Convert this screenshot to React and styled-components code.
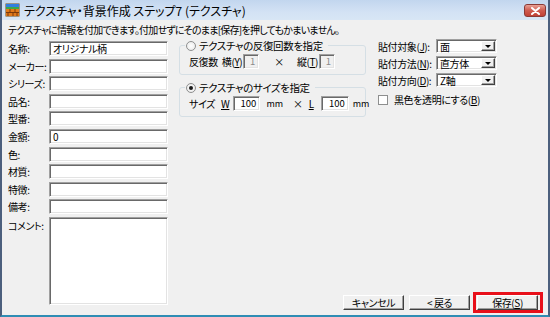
import React from "react";
import styled, { createGlobalStyle, css } from "styled-components";

const GlobalStyle = createGlobalStyle`
    html, body {
        margin: 0;
        padding: 0;
        background: #f0f0f0;
    }
    * {
        box-sizing: border-box;
    }
`;

const FONT = `"Noto Sans CJK JP", "Liberation Sans", sans-serif`;

const sunken = css`
    background: #fff;
    border: 1px solid;
    border-color: #a0a0a0 #fff #fff #a0a0a0;
    box-shadow: inset 1px 1px 0 #696969, inset -1px -1px 0 #e3e3e3;
`;

const raised = css`
    background: #f0f0f0;
    border: 1px solid;
    border-color: #fff #404040 #404040 #fff;
    box-shadow: inset -1px -1px 0 #a0a0a0;
`;

const Window = styled.div`
    width: 550px;
    height: 317px;
    display: flex;
    flex-direction: column;
    background: #f0f0f0;
    border-left: 2px solid #4c5f7d;
    border-right: 2px solid #4c5f7d;
    border-bottom: 2px solid #2f8db4;
    font-family: ${FONT};
    font-size: 10px;
    font-feature-settings: "palt";
    letter-spacing: -0.4px;
    color: #000;
    overflow: hidden;
`;

const TitleBar = styled.div`
    height: 20px;
    flex: none;
    display: flex;
    align-items: center;
    padding: 0 2px 0 3px;
    background: linear-gradient(#c2d6ee, #d3e2f4 60%, #d8e6f5);
    font-size: 12px;
    letter-spacing: 0;

    .title {
        flex: 1;
        margin-left: 4px;
        color: #000;
    }
`;

const CloseButton = styled.div`
    width: 22px;
    height: 13px;
    margin-top: 1px;
    border-radius: 3px;
    border: 1px solid #8a3a36;
    background: linear-gradient(#e8a196, #cf5b4f 50%, #c04236);
    display: flex;
    align-items: center;
    justify-content: center;
`;

const Body = styled.div`
    flex: 1;
    display: flex;
    flex-direction: column;
    padding: 2px 5px 2px 6px;
`;

const Description = styled.div`
    height: 16px;
    line-height: 16px;
    letter-spacing: -0.75px;
`;

const Content = styled.div`
    flex: 1;
    display: flex;
    gap: 11px;
    margin-top: 3px;
`;

const InfoForm = styled.div`
    width: 160px;
    flex: none;
    display: grid;
    grid-template-columns: 41px 119px;
    grid-auto-rows: 15px;
    row-gap: 2.6px;
    align-items: center;
    padding-bottom: 6px;
`;

const FieldLabel = styled.label`
    align-self: ${({ $top }) => ($top ? "start" : "center")};
    padding-top: ${({ $top }) => ($top ? "1px" : "0")};
    white-space: nowrap;
`;

const TextBox = styled.div`
    ${sunken};
    height: ${({ $tall }) => ($tall ? "88px" : "15px")};
    grid-row: ${({ $tall }) => ($tall ? "span 5" : "auto")};
    align-self: start;
    padding: 0 3px;
    line-height: 13px;
    white-space: nowrap;
`;

const RightArea = styled.div`
    flex: 1;
    min-width: 0;
    display: flex;
    flex-direction: column;
`;

const Panels = styled.div`
    display: flex;
    align-items: flex-start;
    gap: 12px;
    margin-top: 4px;
`;

const GroupColumn = styled.div`
    width: 187px;
    flex: 0 0 187px;
    display: flex;
    flex-direction: column;
    gap: 12px;
`;

const GroupBox = styled.div`
    width: 187px;
    height: 30px;
    display: flex;
    flex-direction: column;
    padding: 0 6px 0 9px;
    border: 1px solid #d5dfe5;
    border-radius: 3px;
`;

const Legend = styled.div`
    align-self: flex-start;
    display: flex;
    align-items: center;
    gap: 3px;
    margin: -7px 0 0 -4px;
    padding: 0 5px 0 1px;
    height: 13px;
    background: #f0f0f0;
    font-size: 10.5px;
`;

const Radio = styled.span`
    width: 10px;
    height: 10px;
    border-radius: 50%;
    border: 1px solid #8e8f8f;
    background: radial-gradient(#fff, #e6e6e6);
    display: inline-flex;
    align-items: center;
    justify-content: center;

    &::after {
        content: "";
        width: 4px;
        height: 4px;
        border-radius: 50%;
        background: ${({ $checked }) => ($checked ? "#1a1a1a" : "transparent")};
    }
`;

const GroupRow = styled.div`
    display: flex;
    align-items: center;
    height: 16px;
    margin-top: 1px;
    white-space: nowrap;
`;

const Gap = styled.span`
    display: inline-block;
    width: ${({ $w }) => $w}px;
    flex: none;
`;

const SmallBox = styled.div`
    ${sunken};
    width: ${({ $w }) => $w}px;
    height: 15px;
    flex: none;
    text-align: right;
    padding: 0 3px;
    line-height: 13px;
    font-size: 9.5px;
    letter-spacing: 0;
    background: ${({ $disabled }) => ($disabled ? "#f0f0f0" : "#fff")};
    color: ${({ $disabled }) => ($disabled ? "#8a8a8a" : "#000")};
`;

const Unit = styled.span`
    font-size: 9px;
    letter-spacing: 0;
`;

const OptionsPanel = styled.div`
    flex: none;
    display: grid;
    grid-template-columns: 58px 61px;
    grid-auto-rows: 14px;
    row-gap: 3px;
    align-items: center;
    margin-top: -6px;
`;

const OptionLabel = styled.span`
    white-space: nowrap;
`;

const Select = styled.div`
    ${sunken};
    height: 14px;
    display: flex;
    align-items: stretch;
    padding: 1px;

    .value {
        flex: 1;
        padding-left: 2px;
        line-height: 11px;
    }
`;

const DropButton = styled.div`
    ${raised};
    width: 14px;
    display: flex;
    align-items: center;
    justify-content: center;

    &::after {
        content: "";
        border-left: 3px solid transparent;
        border-right: 3px solid transparent;
        border-top: 3px solid #000;
    }
`;

const CheckRow = styled.div`
    grid-column: 1 / -1;
    display: flex;
    align-items: center;
    gap: 6px;
    margin-top: 5px;
    white-space: nowrap;
`;

const CheckBox = styled.span`
    width: 10px;
    height: 10px;
    border: 1px solid #8e8f8f;
    background: #fff;
    flex: none;
`;

const Footer = styled.div`
    margin-top: auto;
    display: flex;
    justify-content: flex-end;
    align-items: center;
    gap: 5px;
`;

const Button = styled.div`
    ${raised};
    width: 61px;
    height: 15px;
    display: flex;
    align-items: center;
    justify-content: center;
    white-space: nowrap;
`;

const Highlight = styled.div`
    border: 3px solid #e8101a;
    padding: 0 2px 0 1px;
    height: 21px;
    display: flex;
    align-items: center;
    margin-left: -2px;
`;

const TitleIcon = () => (
    <svg width="15" height="14" viewBox="0 0 15 14">
        <rect x="0.5" y="0.5" width="14" height="13" fill="#6a4a1a" />
        <rect x="1" y="1" width="13" height="5" fill="#2f7fe0" />
        <rect x="1" y="4" width="13" height="2" fill="#3aa84a" />
        <rect x="1" y="6" width="13" height="7" fill="#e07a1c" />
        <path d="M1 9.5H14M5 6V9.5M10 6V9.5M3 9.5V13M8 9.5V13M12 9.5V13" stroke="#7a3a0c" strokeWidth="1" />
    </svg>
);

const CloseGlyph = () => (
    <svg width="9" height="8" viewBox="0 0 9 8">
        <path d="M1 1L8 7M8 1L1 7" stroke="#fff" strokeWidth="2" strokeLinecap="round" />
    </svg>
);

const fields = [
    { label: "名称:", value: "オリジナル柄" },
    { label: "メーカー:" },
    { label: "シリーズ:" },
    { label: "品名:" },
    { label: "型番:" },
    { label: "金額:", value: "0" },
    { label: "色:" },
    { label: "材質:" },
    { label: "特徴:" },
    { label: "備考:" },
];

const options = [
    { label: "貼付対象", key: "J", value: "面" },
    { label: "貼付方法", key: "N", value: "直方体" },
    { label: "貼付方向", key: "D", value: "Z軸" },
];

export default function App() {
    return (
        <>
            <GlobalStyle />
            <Window>
                <TitleBar>
                    <TitleIcon />
                    <span className="title">テクスチャ・背景作成 ステップ7 (テクスチャ)</span>
                    <CloseButton>
                        <CloseGlyph />
                    </CloseButton>
                </TitleBar>

                <Body>
                    <Description>
                        テクスチャに情報を付加できます。付加せずにそのまま[保存]を押してもかまいません。
                    </Description>

                    <Content>
                        <InfoForm>
                            {fields.map((f) => (
                                <React.Fragment key={f.label}>
                                    <FieldLabel>{f.label}</FieldLabel>
                                    <TextBox>{f.value}</TextBox>
                                </React.Fragment>
                            ))}
                            <FieldLabel $top>コメント:</FieldLabel>
                            <TextBox $tall />
                        </InfoForm>

                        <RightArea>
                            <Panels>
                                <GroupColumn>
                                    <GroupBox>
                                        <Legend>
                                            <Radio />
                                            テクスチャの反復回数を指定
                                        </Legend>
                                        <GroupRow>
                                            反復数
                                            <Gap $w={4} />
                                            横(<u>Y</u>)
                                            <Gap $w={1} />
                                            <SmallBox $w={16} $disabled>
                                                1
                                            </SmallBox>
                                            <Gap $w={15} />×<Gap $w={13} />
                                            縦(<u>T</u>)
                                            <Gap $w={1} />
                                            <SmallBox $w={16} $disabled>
                                                1
                                            </SmallBox>
                                        </GroupRow>
                                    </GroupBox>

                                    <GroupBox>
                                        <Legend>
                                            <Radio $checked />
                                            テクスチャのサイズを指定
                                        </Legend>
                                        <GroupRow>
                                            サイズ
                                            <Gap $w={6} />
                                            <u>W</u>
                                            <Gap $w={4} />
                                            <SmallBox $w={27}>100</SmallBox>
                                            <Gap $w={6} />
                                            <Unit>mm</Unit>
                                            <Gap $w={10} />×<Gap $w={6} />
                                            <u>L</u>
                                            <Gap $w={7} />
                                            <SmallBox $w={28}>100</SmallBox>
                                            <Gap $w={4} />
                                            <Unit>mm</Unit>
                                        </GroupRow>
                                    </GroupBox>
                                </GroupColumn>

                                <OptionsPanel>
                                    {options.map((o) => (
                                        <React.Fragment key={o.key}>
                                            <OptionLabel>
                                                {o.label}(<u>{o.key}</u>):
                                            </OptionLabel>
                                            <Select>
                                                <span className="value">{o.value}</span>
                                                <DropButton />
                                            </Select>
                                        </React.Fragment>
                                    ))}
                                    <CheckRow>
                                        <CheckBox />
                                        <span>
                                            黒色を透明にする(<u>B</u>)
                                        </span>
                                    </CheckRow>
                                </OptionsPanel>
                            </Panels>

                            <Footer>
                                <Button>キャンセル</Button>
                                <Button>&lt; 戻る</Button>
                                <Highlight>
                                    <Button>
                                        保存(<u>S</u>)
                                    </Button>
                                </Highlight>
                            </Footer>
                        </RightArea>
                    </Content>
                </Body>
            </Window>
        </>
    );
}
